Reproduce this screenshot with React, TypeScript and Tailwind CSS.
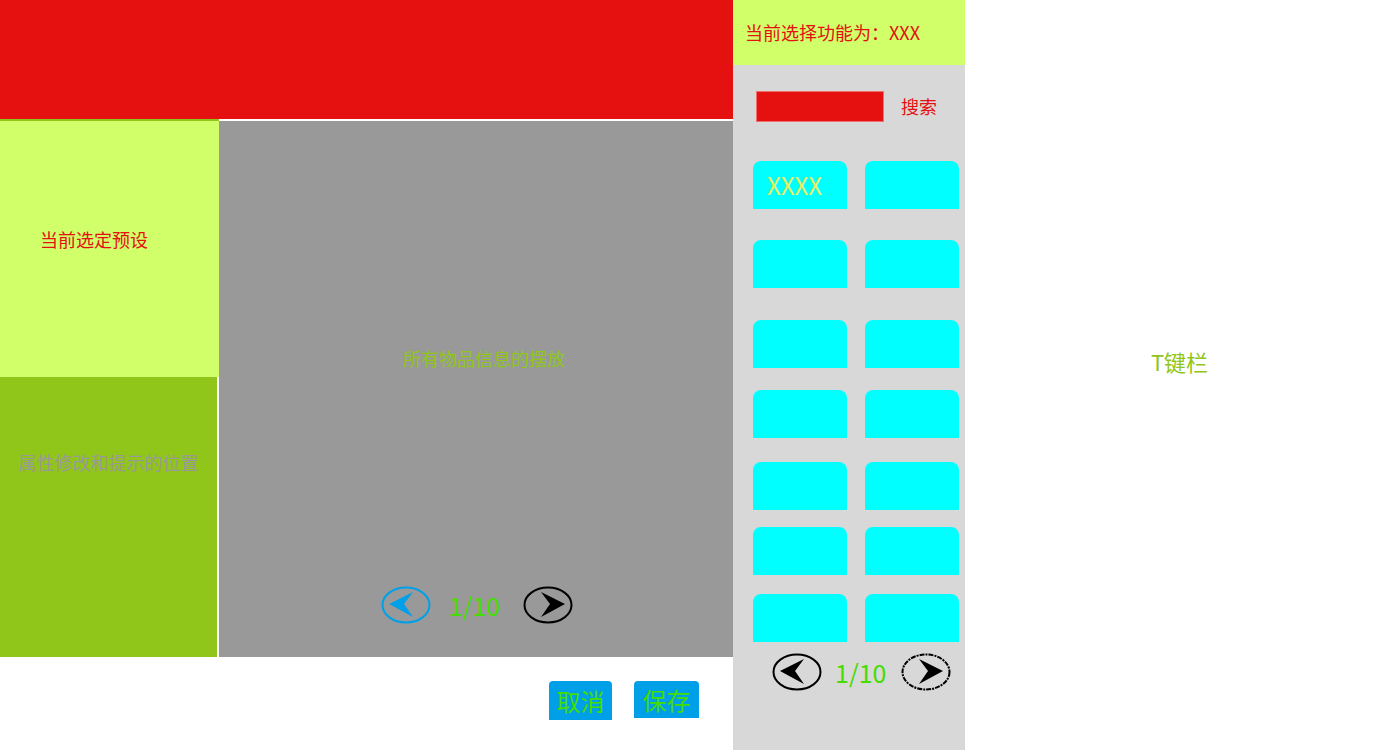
import React from "react";

const font = { fontFamily: '"Noto Sans CJK SC", "Noto Sans", sans-serif' };

function Arrow({ dir, color, rough }: { dir: "left" | "right"; color: string; rough?: boolean }) {
  const head =
    dir === "left"
      ? "M8 18 L32 6 L23 18 L32 31 Z"
      : "M42 18 L18 6 L27 18 L18 31 Z";
  return (
    <svg width="50" height="38" viewBox="0 0 50 38">
      <ellipse
        cx="25"
        cy="19"
        rx="23.5"
        ry="17.5"
        fill="none"
        stroke={color}
        strokeWidth="2"
        strokeDasharray={rough ? "5 1 2 1" : undefined}
      />
      <path d={head} fill={color} />
    </svg>
  );
}

function Pager({ leftColor, rough, gapL, gapR }: { leftColor: string; rough?: boolean; gapL: string; gapR: string }) {
  return (
    <div className="flex items-center">
      <Arrow dir="left" color={leftColor} />
      <span className={`${gapL} ${gapR} text-[25px] leading-none text-[#44dd00]`}>1/10</span>
      <Arrow dir="right" color="#000000" rough={rough} />
    </div>
  );
}

const rows = [
  { mt: "mt-[39px]", first: true },
  { mt: "mt-[31px]" },
  { mt: "mt-[32px]" },
  { mt: "mt-[22px]" },
  { mt: "mt-[24px]" },
  { mt: "mt-[17px]" },
  { mt: "mt-[19px]" },
];

export default function App() {
  return (
    <div className="flex w-[1400px] h-[750px] bg-white overflow-hidden" style={font}>
      {/* main editor area */}
      <div className="flex flex-col w-[733px]">
        <div className="h-[119px] bg-[#e51010]" />
        <div className="flex h-[538px]">
          <div className="flex flex-col w-[219px]">
            <div className="h-[258px] bg-[#d0ff6a] border-t-2 border-[#8fc619] flex items-center pl-[40px] pb-[20px] text-[18px] text-[#e51010]">
              当前选定预设
            </div>
            <div className="w-[217px] h-[280px] bg-[#8fc619] flex justify-center pt-[72px] text-[18px] text-[#999999]">
              属性修改和提示的位置
            </div>
          </div>
          <div className="flex-1 border-t-2 border-white bg-[#999999] flex flex-col items-center">
            <div className="mt-[224px] text-[18px] text-[#8fc619] ml-[16px]">所有物品信息的摆放</div>
            <div className="mt-[214px] ml-[2px]">
              <Pager leftColor="#00a0e9" gapL="ml-[18px]" gapR="mr-[23px]" />
            </div>
          </div>
        </div>
        <div className="flex items-start pt-[24px] pl-[549px] gap-[22px]">
          <div className="w-[63px] h-[39px] bg-[#00a0e9] rounded-t-[4px] flex items-center justify-center text-[24px] text-[#44dd00]">
            取消
          </div>
          <div className="w-[65px] h-[37px] bg-[#00a0e9] rounded-t-[4px] flex items-center justify-center text-[24px] text-[#44dd00]">
            保存
          </div>
        </div>
      </div>

      {/* sidebar */}
      <div className="w-[232px] bg-[#d8d8d8] flex flex-col">
        <div className="h-[65px] bg-[#d0ff6a] flex items-center pl-[12px] text-[18px] text-[#e51010]">
          当前选择功能为：XXX
        </div>
        <div className="flex items-center mt-[26px] pl-[23px]">
          <div className="w-[128px] h-[31px] bg-[#e51010] border border-white/40" />
          <span className="ml-[17px] text-[18px] text-[#e51010]">搜索</span>
        </div>
        {rows.map((r, i) => (
          <div key={i} className={`flex gap-[18px] pl-[20px] ${r.mt}`}>
            <div className="w-[94px] h-[48px] bg-[#00ffff] rounded-t-[8px] flex items-center pl-[14px] text-[24px] text-[#e8f060]">
              {r.first ? "XXXX" : ""}
            </div>
            <div className="w-[94px] h-[48px] bg-[#00ffff] rounded-t-[8px]" />
          </div>
        ))}
        <div className="mt-[11px] pl-[39px]">
          <Pager leftColor="#000000" rough gapL="ml-[13px]" gapR="mr-[15px]" />
        </div>
      </div>

      {/* T bar */}
      <div className="flex-1 flex items-center justify-center pb-[28px] pr-[6px] text-[22px] text-[#8fc619]">
        T键栏
      </div>
    </div>
  );
}
